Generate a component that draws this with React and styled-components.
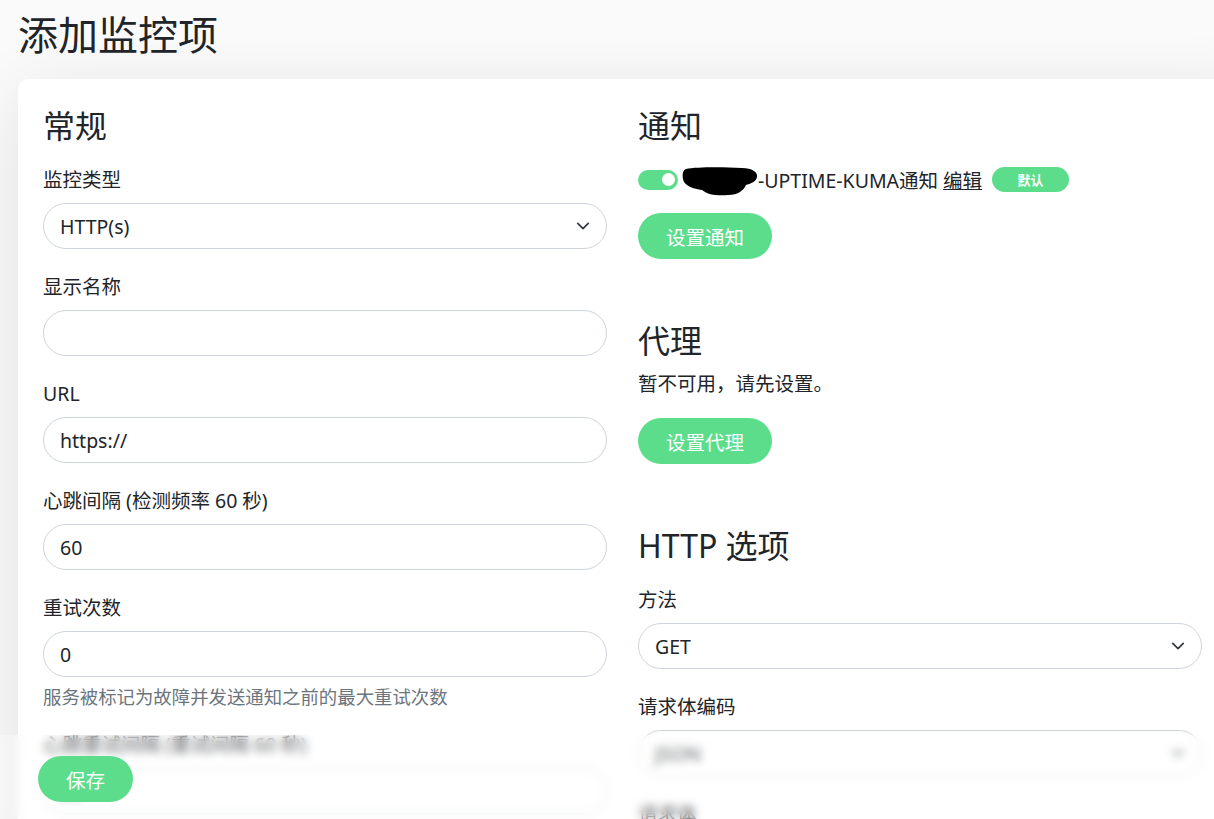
import styled, { createGlobalStyle } from 'styled-components';

const GlobalStyle = createGlobalStyle`
  html, body {
    margin: 0;
    padding: 0;
    overflow: hidden;
    background: #fafafa;
  }
  body {
    font-family: "Noto Sans", "Noto Sans CJK SC", sans-serif;
    font-size: 19.5px;
    color: #212529;
  }
  * {
    box-sizing: border-box;
  }
`;

const Page = styled.div`
  padding: 10px 0 0 18px;
  height: 819px;
`;

const Title = styled.h1`
  margin: 0 0 20px;
  font-size: 40px;
  font-weight: 400;
  line-height: 49px;
`;

const Card = styled.div`
  width: 1240px;
  background: #fff;
  border-radius: 10px;
  box-shadow: 0 15px 70px rgba(0, 0, 0, 0.1);
  padding: 28px 25px;
  display: grid;
  grid-template-columns: 564px 564px;
  column-gap: 31px;
  align-items: start;
`;

const Column = styled.div`
  display: flex;
  flex-direction: column;
`;

const Section = styled.section`
  display: flex;
  flex-direction: column;
  margin-bottom: ${(p) => (p.$last ? 0 : 63)}px;
`;

const Heading = styled.h2`
  margin: 0 0 10px;
  font-size: 32px;
  font-weight: 400;
  line-height: 38px;
`;

const Field = styled.div`
  margin-bottom: 13px;
`;

const Label = styled.label`
  display: block;
  line-height: 27px;
  margin: 11px 0 10px;
`;

const Input = styled.div`
  height: 46px;
  border: 1px solid #ced4da;
  border-radius: 50rem;
  padding: 0 16px;
  display: flex;
  align-items: center;
  justify-content: space-between;
  line-height: 27px;
  color: #212529;
`;

const Help = styled.div`
  margin-top: 6px;
  margin-bottom: -3px;
  color: #6c757d;
  font-size: 18.4px;
  line-height: 27px;
`;

const Text = styled.p`
  margin: 0 0 21px;
  line-height: 27px;
`;

const Button = styled.button`
  align-self: flex-start;
  height: 46px;
  border: none;
  border-radius: 50rem;
  background: #5cdd8b;
  color: #fff;
  font-family: inherit;
  font-size: 19.5px;
  padding: 0 28px;
  cursor: pointer;
`;

const NotifyRow = styled.div`
  display: flex;
  align-items: center;
  height: 27px;
  margin: 11px 0 20px;
  white-space: nowrap;
`;

const Toggle = styled.span`
  position: relative;
  width: 40px;
  height: 20px;
  border-radius: 10px;
  background: #5cdd8b;
  margin-right: 4px;
  flex: none;

  &::after {
    content: '';
    position: absolute;
    top: 3.5px;
    right: 3.5px;
    width: 13px;
    height: 13px;
    border-radius: 50%;
    background: #fff;
  }
`;

const EditLink = styled.a`
  color: #212529;
  text-decoration: underline;
  margin-left: 5px;
`;

const Badge = styled.span`
  margin-left: 10px;
  height: 25px;
  width: 77px;
  border-radius: 50rem;
  background: #5cdd8b;
  color: #fff;
  font-size: 13px;
  font-weight: 700;
  display: inline-flex;
  align-items: center;
  justify-content: center;
`;

const BottomBar = styled.div`
  position: fixed;
  left: 0;
  right: 0;
  bottom: 0;
  height: 84px;
  padding: 21px 38px;
  backdrop-filter: blur(4px);
  background: rgba(255, 255, 255, 0.3);
`;

const Chevron = () => (
  <svg width="14" height="14" viewBox="0 0 16 16" fill="none">
    <path d="M2 5l6 6 6-6" stroke="#343a40" strokeWidth="2" strokeLinecap="round" strokeLinejoin="round" />
  </svg>
);

const Redacted = () => (
  <svg width="76" height="29" viewBox="0 0 76 29" style={{ flex: 'none', marginTop: 4 }}>
    <path
      d="M4 2 C14 0 40 0 60 1 C70 1 76 5 75 10 C74 15 68 17 64 18 C62 23 56 28 46 28 C36 29 26 28 20 23 C12 22 2 19 1 12 C0 7 1 3 4 2 Z"
      fill="#000"
    />
  </svg>
);

const Select = ({ value }) => (
  <Input>
    <span>{value}</span>
    <Chevron />
  </Input>
);

const leftFields = [
  { label: '显示名称', value: '' },
  { label: 'URL', value: 'https://' },
  { label: '心跳间隔 (检测频率 60 秒)', value: '60' },
];

const App = () => (
  <Page>
    <GlobalStyle />
    <Title>添加监控项</Title>
    <Card>
      <Column>
        <Heading>常规</Heading>
        <Field>
          <Label>监控类型</Label>
          <Select value="HTTP(s)" />
        </Field>
        {leftFields.map((f) => (
          <Field key={f.label}>
            <Label>{f.label}</Label>
            <Input>{f.value}</Input>
          </Field>
        ))}
        <Field>
          <Label>重试次数</Label>
          <Input>0</Input>
          <Help>服务被标记为故障并发送通知之前的最大重试次数</Help>
        </Field>
        <Field>
          <Label>心跳重试间隔 (重试间隔 60 秒)</Label>
          <Input>60</Input>
        </Field>
      </Column>
      <Column>
        <Section>
          <Heading>通知</Heading>
          <NotifyRow>
            <Toggle />
            <Redacted />
            <span>-UPTIME-KUMA通知</span>
            <EditLink href="#">编辑</EditLink>
            <Badge>默认</Badge>
          </NotifyRow>
          <Button>设置通知</Button>
        </Section>
        <Section>
          <Heading>代理</Heading>
          <Text>暂不可用，请先设置。</Text>
          <Button>设置代理</Button>
        </Section>
        <Section $last>
          <Heading>HTTP 选项</Heading>
          <Field>
            <Label>方法</Label>
            <Select value="GET" />
          </Field>
          <Field>
            <Label>请求体编码</Label>
            <Select value="JSON" />
          </Field>
          <Field>
            <Label>请求体</Label>
          </Field>
        </Section>
      </Column>
    </Card>
    <BottomBar>
      <Button>保存</Button>
    </BottomBar>
  </Page>
);

export default App;
